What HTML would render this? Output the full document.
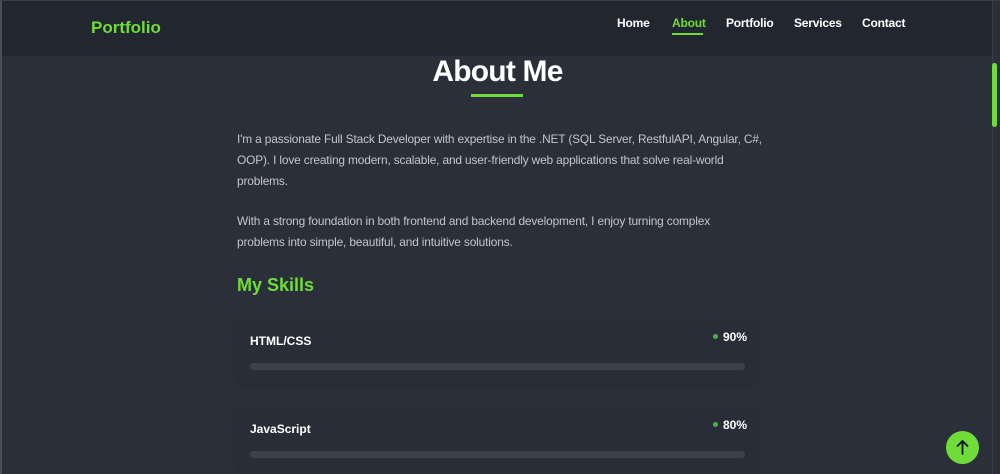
<!DOCTYPE html>
<html><head><meta charset="utf-8"><style>
*{margin:0;padding:0;box-sizing:border-box}
html,body{width:1000px;height:474px;overflow:hidden;background:#2b2f3a;font-family:"Liberation Sans",sans-serif}
.frame{position:absolute;left:0;top:0;width:1000px;height:474px;border-left:2px solid #4a4e58;border-top:1px solid #3a3e48;}
.hdr{position:absolute;left:2px;top:1px;width:990px;height:55px;background:#22262e}
.logo{position:absolute;left:91px;top:18px;color:#6fdc3a;font-weight:bold;font-size:17px}
.nav{position:absolute;top:16px;font-size:12px;font-weight:bold;color:#fff;letter-spacing:-0.2px}
.ul{position:absolute;left:672px;top:33px;width:31px;height:2px;background:#6fdc3a}
h1{position:absolute;left:0;width:995px;text-align:center;top:55px;color:#fff;font-size:30px;font-weight:bold;letter-spacing:-0.8px}
.bar1{position:absolute;left:471px;top:94px;width:52px;height:3px;background:#6fdc3a}
p{position:absolute;left:237px;width:545px;color:#c4c6cc;font-size:11.9px;line-height:21px;letter-spacing:-0.15px}
h2{position:absolute;left:237px;top:275px;color:#6fdc3a;font-size:18px;font-weight:bold}
.card{position:absolute;left:237px;width:520px;height:60px;background:#292d37;box-shadow:0 3px 8px rgba(0,0,0,.1);border-radius:4px}
.sk{position:absolute;left:250px;color:#fff;font-size:12px;font-weight:bold}
.pc{position:absolute;left:713px;color:#fff;font-size:12px;font-weight:bold}
.pc:before{content:"";display:inline-block;width:5px;height:5px;border-radius:50%;background:#4caf50;margin-right:5px;vertical-align:2px}
.track{position:absolute;left:250px;width:495px;height:7px;border-radius:4px;background:#3c404b}
.sb{position:absolute;left:992px;top:1px;width:8px;height:473px;background:#2b2f3a;border-left:1px solid #3a3e48}
.thumb{position:absolute;left:992px;top:63px;width:5px;height:64px;border-radius:3px;background:#6fdc3a}
.up{position:absolute;left:946px;top:431px;width:33px;height:33px;border-radius:50%;background:#6fdc3a}
</style></head><body>
<div class="hdr"></div>
<div class="logo">Portfolio</div>
<div class="nav" style="left:617px">Home</div>
<div class="nav" style="left:672px;color:#6fdc3a">About</div>
<div class="nav" style="left:726px">Portfolio</div>
<div class="nav" style="left:794px">Services</div>
<div class="nav" style="left:862px">Contact</div>
<div class="ul"></div>
<h1>About Me</h1>
<div class="bar1"></div>
<p style="top:129px">I'm a passionate Full Stack Developer with expertise in the .NET (SQL Server, RestfulAPI, Angular, C#,<br>OOP). I love creating modern, scalable, and user-friendly web applications that solve real-world<br>problems.</p>
<p style="top:211px">With a strong foundation in both frontend and backend development, I enjoy turning complex<br>problems into simple, beautiful, and intuitive solutions.</p>
<h2>My Skills</h2>
<div class="card" style="top:321px"></div>
<div class="sk" style="top:334px">HTML/CSS</div>
<div class="pc" style="top:330px">90%</div>
<div class="track" style="top:363px"></div>
<div class="card" style="top:409px"></div>
<div class="sk" style="top:422px">JavaScript</div>
<div class="pc" style="top:418px">80%</div>
<div class="track" style="top:451px"></div>
<div class="sb"></div>
<div class="thumb"></div>
<div class="up"><svg width="33" height="33" viewBox="0 0 33 33"><path d="M16.5 23V10M11.5 15l5-5 5 5" stroke="#111" stroke-width="1.8" fill="none" stroke-linecap="round" stroke-linejoin="round"/></svg></div>
<div class="frame"></div>
</body></html>
